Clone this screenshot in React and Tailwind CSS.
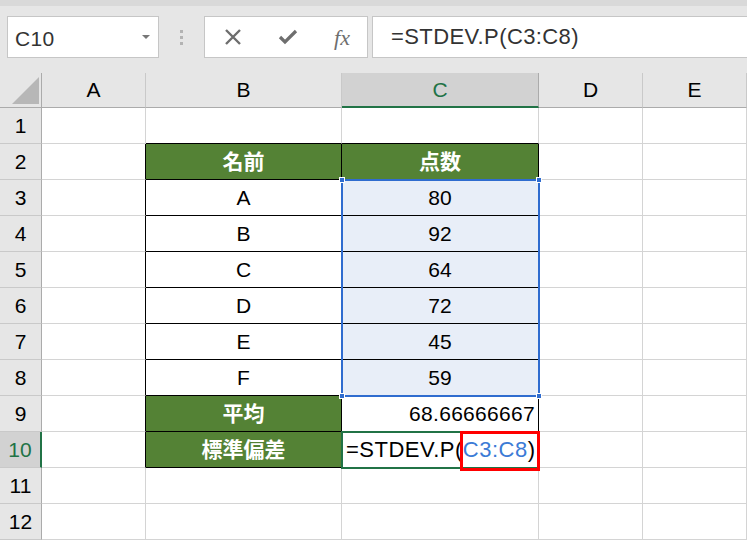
import React from 'react';

const COLS = ['A', 'B', 'C', 'D', 'E'];
const ROWS = [1, 2, 3, 4, 5, 6, 7, 8, 9, 10, 11, 12];

const DATA = {
  'B2': { text: '名前', head: true },
  'C2': { text: '点数', head: true },
  'B3': { text: 'A' }, 'C3': { text: '80' },
  'B4': { text: 'B' }, 'C4': { text: '92' },
  'B5': { text: 'C' }, 'C5': { text: '64' },
  'B6': { text: 'D' }, 'C6': { text: '72' },
  'B7': { text: 'E' }, 'C7': { text: '45' },
  'B8': { text: 'F' }, 'C8': { text: '59' },
  'B9': { text: '平均', head: true },
  'C9': { text: '68.66666667', right: true },
  'B10': { text: '標準偏差', head: true },
};

const inTable = (c, r) => (c === 'B' || c === 'C') && r >= 2 && r <= 10;
const inSel = (c, r) => c === 'C' && r >= 3 && r <= 8;

const Cell = ({ c, r }) => {
  const d = DATA[c + r];
  const table = inTable(c, r);
  let cls = 'flex items-center justify-center border-r border-b text-[21px] text-black overflow-visible whitespace-nowrap ';
  cls += table ? 'border-r-black border-b-black ' : 'border-r-[#d4d4d4] border-b-[#d4d4d4] ';
  if (c === 'A' && r >= 2 && r <= 10) cls += 'border-r-black ';
  if ((c === 'B' || c === 'C') && r === 1) cls += 'border-b-black ';
  if (d?.head) cls += 'bg-[#548235] text-white font-bold ';
  else if (inSel(c, r)) cls += 'bg-[#e8eef8] ';
  else cls += 'bg-white ';
  if (d?.right) cls += 'justify-end pr-[3px] tracking-[0.3px] ';

  if (c === 'C' && r === 10) {
    return (
      <div className="flex items-center justify-start pl-[4px] border-r border-b border-r-black border-b-black bg-white text-[22px] tracking-[0.5px] text-black whitespace-nowrap overflow-visible">
        <span>=STDEV.P(</span>
        <span className="text-[#3c7bd6]">C3:C8</span>
        <span>)</span>
      </div>
    );
  }
  return <div className={cls}>{d?.text}</div>;
};

export default function App() {
  return (
    <div className="w-[747px] h-[541px] overflow-hidden bg-white" style={{ fontFamily: '"Liberation Sans","Noto Sans CJK JP",sans-serif' }}>
      {/* toolbar */}
      <div className="h-[6px] bg-[#d9d9d9]" />
      <div className="h-[67px] bg-[#e6e6e6] flex items-start pt-[10px] pl-[7px] gap-0">
        <div className="w-[152px] h-[42px] bg-white border border-[#c6c6c6] flex items-center justify-between pl-[7px] pr-[8px]">
          <span className="text-[21px] tracking-[0.3px] text-[#333] pt-[4px]">C10</span>
          <svg width="8" height="5" viewBox="0 0 8 5"><path d="M0 0h8L4 4z" fill="#777" /></svg>
        </div>
        <div className="w-[45px] h-[42px] flex flex-col items-center justify-center gap-[3px]">
          <span className="w-[3px] h-[3px] bg-[#b3b3b3]" />
          <span className="w-[3px] h-[3px] bg-[#b3b3b3]" />
          <span className="w-[3px] h-[3px] bg-[#b3b3b3]" />
        </div>
        <div className="w-[164px] h-[42px] bg-white border border-[#c6c6c6] flex items-center justify-between pl-[19px] pr-[17px]">
          <svg width="18" height="18" viewBox="0 0 18 18"><path d="M2 2L16 16M16 2L2 16" stroke="#6e6e6e" strokeWidth="2.4" /></svg>
          <svg width="20" height="16" viewBox="0 0 20 16"><path d="M2 8l5 5L18 2" stroke="#6e6e6e" strokeWidth="3.2" fill="none" /></svg>
          <span className="text-[22px] italic text-[#6e6e6e]" style={{ fontFamily: '"Liberation Serif",serif' }}>fx</span>
        </div>
        <div className="ml-[4px] flex-1 h-[42px] bg-white border border-[#c6c6c6] border-r-0 flex items-center pl-[18px]">
          <span className="text-[22px] tracking-[0.4px] text-[#333] -mt-[2px]">=STDEV.P(C3:C8)</span>
        </div>
      </div>

      {/* sheet */}
      <div className="relative">
        <div className="grid grid-cols-[42px_104px_196px_197px_104px_104px] grid-rows-[35px_repeat(12,36px)]">
          <div className="relative bg-[#e6e6e6] border-r border-b border-[#ababab]">
            <svg className="absolute left-0 top-0" width="42" height="35" viewBox="0 0 42 35"><path d="M39 4V31H12z" fill="#b7b7b7" /></svg>
          </div>
          {COLS.map((c) => (
            <div
              key={c}
              className={
                c === 'C'
                  ? 'flex items-center justify-center bg-[#d2d2d2] text-[#217346] text-[21px] border-r border-r-[#ababab] border-b-2 border-b-[#217346]'
                  : 'flex items-center justify-center bg-[#e6e6e6] text-black text-[21px] border-r border-r-[#c9c9c9] border-b border-b-[#ababab]'
              }
            >
              {c}
            </div>
          ))}
          {ROWS.map((r) => (
            <React.Fragment key={r}>
              <div
                className={
                  r === 10
                    ? 'flex items-center justify-center bg-[#d2d2d2] text-[#217346] text-[21px] border-r-2 border-r-[#217346] border-b border-b-[#c9c9c9]'
                    : 'flex items-center justify-center bg-[#e6e6e6] text-black text-[21px] border-r border-r-[#ababab] border-b border-b-[#c9c9c9]'
                }
              >
                {r}
              </div>
              {COLS.map((c) => (
                <Cell key={c + r} c={c} r={r} />
              ))}
            </React.Fragment>
          ))}
        </div>

        {/* selection C3:C8 */}
        <div className="absolute left-[341px] top-[106px] w-[199px] h-[218px] border-2 border-[#2f6ccf] pointer-events-none">
          <span className="absolute -left-[4px] -top-[4px] w-[6px] h-[6px] bg-[#2f6ccf] border border-white" />
          <span className="absolute -right-[4px] -top-[4px] w-[6px] h-[6px] bg-[#2f6ccf] border border-white" />
          <span className="absolute -left-[4px] -bottom-[4px] w-[6px] h-[6px] bg-[#2f6ccf] border border-white" />
          <span className="absolute -right-[4px] -bottom-[4px] w-[6px] h-[6px] bg-[#2f6ccf] border border-white" />
        </div>

        {/* active cell C10 */}
        <div className="absolute left-[341px] top-[358px] w-[199px] h-[38px] border-2 border-[#217346] pointer-events-none" />

        {/* red highlight */}
        <div className="absolute left-[460px] top-[358px] w-[80px] h-[40px] border-[3px] border-[#ff0000] pointer-events-none" />
      </div>
    </div>
  );
}
